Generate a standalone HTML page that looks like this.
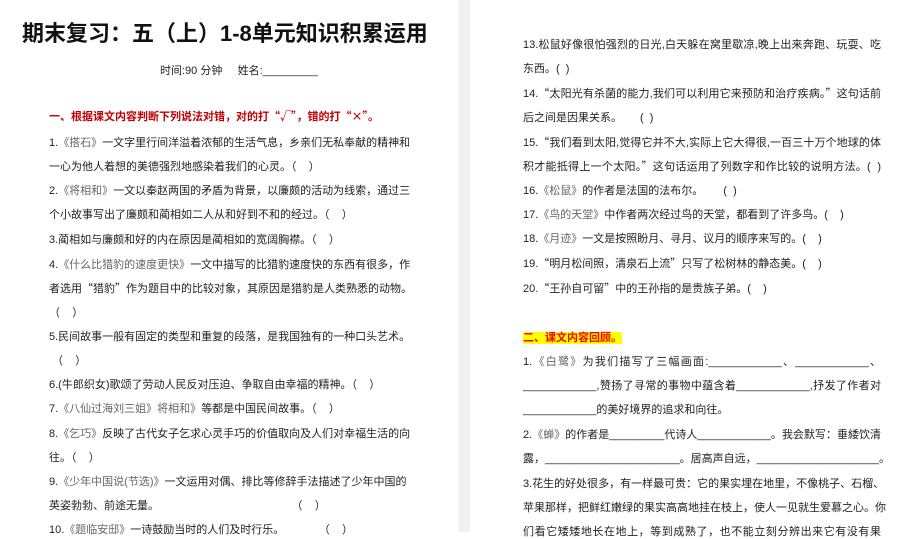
<!DOCTYPE html>
<html><head><meta charset="utf-8"><style>
body{margin:0;width:904px;height:532px;overflow:hidden;background:#fff;font-family:"Liberation Sans","Noto Sans CJK SC",sans-serif;color:#222;position:relative}
.g{position:absolute;left:459px;top:0;width:11px;height:532px;background:#eef0f5}
.l{position:absolute;font-size:11px;line-height:14px;height:14px;white-space:nowrap;text-align:justify;text-align-last:justify}
.n{text-align-last:left}
.L{left:49px;width:357px}
.R{left:523px;width:358px}
.t{color:#666}
.q{font-family:"Noto Sans CJK SC",sans-serif;line-height:0}
h1{position:absolute;left:22px;top:16px;margin:0;font-size:22px;font-weight:bold;color:#111;letter-spacing:0px;white-space:nowrap}
.red{color:#c00000;font-weight:bold}
.hl{background:#ffff00;color:#ff0000;font-weight:bold}
</style></head><body>
<div class="g"></div>
<h1>期末复习：五（上）1-8单元知识积累运用</h1>
<div class="l n" style="left:160px;top:64px">时间:90 分钟&nbsp;&nbsp;&nbsp;&nbsp;&nbsp;姓名:_________</div>
<div class="l L n red" style="top:110px">一、根据课文内容判断下列说法对错，对的打<span class="q">“√”</span>，错的打<span class="q">“×”</span>。</div>
<div class="l L" style="top:136px">1.<span class="t">《搭石》</span>一文字里行间洋溢着浓郁的生活气息，乡亲们无私奉献的精神和</div>
<div class="l L n" style="top:160px">一心为他人着想的美德强烈地感染着我们的心灵。（&nbsp;&nbsp;&nbsp;&nbsp;）</div>
<div class="l L" style="top:184px">2.<span class="t">《将相和》</span>一文以秦赵两国的矛盾为背景，以廉颇的活动为线索，通过三</div>
<div class="l L n" style="top:208px">个小故事写出了廉颇和蔺相如二人从和好到不和的经过。（&nbsp;&nbsp;&nbsp;&nbsp;）</div>
<div class="l L n" style="top:233px">3.蔺相如与廉颇和好的内在原因是蔺相如的宽阔胸襟。（&nbsp;&nbsp;&nbsp;&nbsp;）</div>
<div class="l L" style="top:258px">4.<span class="t">《什么比猎豹的速度更快》</span>一文中描写的比猎豹速度快的东西有很多，作</div>
<div class="l L" style="top:282px">者选用<span class="q">“</span>猎豹<span class="q">”</span>作为题目中的比较对象，其原因是猎豹是人类熟悉的动物。</div>
<div class="l L n" style="top:306px">（&nbsp;&nbsp;&nbsp;&nbsp;）</div>
<div class="l L" style="top:330px">5.民间故事一般有固定的类型和重复的段落，是我国独有的一种口头艺术。</div>
<div class="l L n" style="top:354px">&nbsp;（&nbsp;&nbsp;&nbsp;&nbsp;）</div>
<div class="l L n" style="top:378px">6.(牛郎织女)歌颂了劳动人民反对压迫、争取自由幸福的精神。（&nbsp;&nbsp;&nbsp;&nbsp;）</div>
<div class="l L n" style="top:402px">7.<span class="t">《八仙过海刘三姐》将相和》</span>等都是中国民间故事。（&nbsp;&nbsp;&nbsp;&nbsp;）</div>
<div class="l L" style="top:427px">8.<span class="t">《乞巧》</span>反映了古代女子乞求心灵手巧的价值取向及人们对幸福生活的向</div>
<div class="l L n" style="top:451px">往。（&nbsp;&nbsp;&nbsp;&nbsp;）</div>
<div class="l L" style="top:475px">9.<span class="t">《少年中国说(节选)》</span>一文运用对偶、排比等修辞手法描述了少年中国的</div>
<div class="l L n" style="top:499px">英姿勃勃、前途无量。<span style="margin-left:138px">（&nbsp;&nbsp;&nbsp;&nbsp;）</span></div>
<div class="l L n" style="top:523px">10.<span class="t">《题临安邸》</span>一诗鼓励当时的人们及时行乐。<span style="margin-left:40px">（&nbsp;&nbsp;&nbsp;&nbsp;）</span></div>

<div class="l R" style="top:38px">13.松鼠好像很怕强烈的日光,白天躲在窝里歇凉,晚上出来奔跑、玩耍、吃</div>
<div class="l R n" style="top:62px">东西。(&nbsp;&nbsp;)</div>
<div class="l R" style="top:87px">14.<span class="q">“</span>太阳光有杀菌的能力,我们可以利用它来预防和治疗疾病。<span class="q">”</span>这句话前</div>
<div class="l R n" style="top:111px">后之间是因果关系。<span style="margin-left:18px">(&nbsp;&nbsp;)</span></div>
<div class="l R" style="top:136px">15.<span class="q">“</span>我们看到太阳,觉得它并不大,实际上它大得很,一百三十万个地球的体</div>
<div class="l R" style="top:160px">积才能抵得上一个太阳。<span class="q">”</span>这句话运用了列数字和作比较的说明方法。(&nbsp;&nbsp;)</div>
<div class="l R n" style="top:184px">16.<span class="t">《松鼠》</span>的作者是法国的法布尔。<span style="margin-left:20px">(&nbsp;&nbsp;)</span></div>
<div class="l R n" style="top:208px">17.<span class="t">《鸟的天堂》</span>中作者两次经过鸟的天堂，都看到了许多鸟。(&nbsp;&nbsp;&nbsp;&nbsp;)</div>
<div class="l R n" style="top:232px">18.<span class="t">《月迹》</span>一文是按照盼月、寻月、议月的顺序来写的。(&nbsp;&nbsp;&nbsp;&nbsp;)</div>
<div class="l R n" style="top:257px">19.<span class="q">“</span>明月松间照，清泉石上流<span class="q">”</span>只写了松树林的静态美。(&nbsp;&nbsp;&nbsp;&nbsp;)</div>
<div class="l R n" style="top:282px">20.<span class="q">“</span>王孙自可留<span class="q">”</span>中的王孙指的是贵族子弟。(&nbsp;&nbsp;&nbsp;&nbsp;)</div>
<div class="l R n" style="top:331px"><span class="hl">二、课文内容回顾。</span></div>
<div class="l R" style="top:355px">1.<span class="t">《白鹭》</span>为我们描写了三幅画面:____________、____________、</div>
<div class="l R" style="top:379px">____________,赞扬了寻常的事物中蕴含着____________,抒发了作者对</div>
<div class="l R n" style="top:403px">____________的美好境界的追求和向往。</div>
<div class="l R" style="top:428px">2.<span class="t">《蝉》</span>的作者是_________代诗人____________。我会默写：垂緌饮清</div>
<div class="l R n" style="top:452px">露，______________________。居高声自远，____________________。</div>
<div class="l R" style="top:477px">3.花生的好处很多，有一样最可贵：它的果实埋在地里，不像桃子、石榴、</div>
<div class="l R" style="top:501px">苹果那样，把鲜红嫩绿的果实高高地挂在枝上，使人一见就生爱慕之心。你</div>
<div class="l R" style="top:525px">们看它矮矮地长在地上，等到成熟了，也不能立刻分辨出来它有没有果</div>
</body></html>
